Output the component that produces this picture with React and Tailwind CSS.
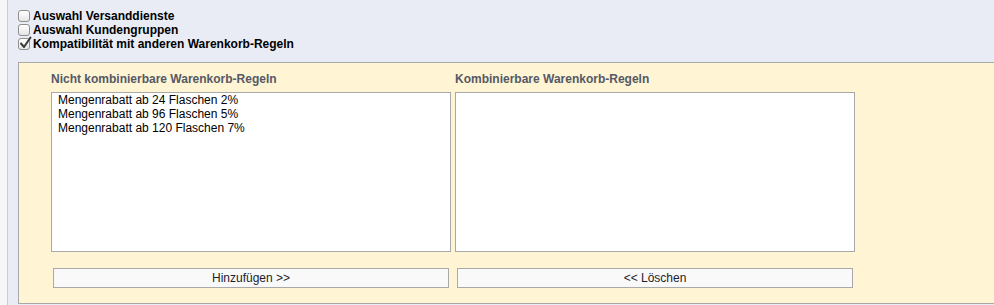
// Warenkorb-Regeln: Kompatibilität zwischen Regeln
const fontStack = { fontFamily: '"Liberation Sans", Arial, Helvetica, sans-serif' };

const options = [
  { label: 'Auswahl Versanddienste', checked: false },
  { label: 'Auswahl Kundengruppen', checked: false },
  { label: 'Kompatibilität mit anderen Warenkorb-Regeln', checked: true },
];

const nonCombinable = [
  'Mengenrabatt ab 24 Flaschen 2%',
  'Mengenrabatt ab 96 Flaschen 5%',
  'Mengenrabatt ab 120 Flaschen 7%',
];

const CheckBox = ({ checked }) => (
  <span className="relative w-[12px] h-[12px] shrink-0 rounded-[3px] border border-[#8e8e8e] bg-gradient-to-b from-white to-[#e6e6e6] shadow-[inset_0_1px_0_#fff]">
    {checked && (
      <svg className="absolute left-[0px] top-[-3px]" width="13" height="14" viewBox="0 0 13 14">
        <path d="M2 7.5 L5 11 L11.5 1.5" fill="none" stroke="#3a3a3a" strokeWidth="2" strokeLinecap="round" strokeLinejoin="round" />
      </svg>
    )}
  </span>
);

const RuleList = ({ title, items }) => (
  <div className="w-[400px] flex flex-col">
    <h3 className="text-[12px] leading-[14px] font-bold text-[#555966]">{title}</h3>
    <div className="mt-[6px] h-[160px] bg-white border border-[#a9a9a9] pl-[6px]">
      {items.map((item) => (
        <div key={item} className="text-[12px] leading-[15px] text-black -mt-[1px] first:mt-0">
          {item}
        </div>
      ))}
    </div>
  </div>
);

const ActionButton = ({ label }) => (
  <button className="w-[396px] h-[20px] mx-[2px] bg-[#f9f9f9] border border-[#a9a9a9] text-[12px] leading-[18px] text-[#1c1c2a]">
    {label}
  </button>
);

export default function App() {
  return (
    <div className="w-[994px] h-[305px] flex bg-white overflow-hidden" style={fontStack}>
      <div className="w-[7px] shrink-0 bg-[#f6f6f8]" />
      <div className="flex-1 border-l border-[#c9cbd3] bg-[#e9ecf5] pl-[10px] flex flex-col">
        <div className="pt-[9px] flex flex-col">
          {options.map((opt) => (
            <label key={opt.label} className="h-[14px] flex items-center gap-[3px] text-[12px] leading-[14px] font-bold text-black">
              <CheckBox checked={opt.checked} />
              <span>{opt.label}</span>
            </label>
          ))}
        </div>

        <div className="mt-[11px] h-[242px] bg-[#fff4d3] border-t border-l border-b border-[#a8a8a8] pl-[32px] pt-[9px]">
          <div className="flex gap-[4px]">
            <RuleList title="Nicht kombinierbare Warenkorb-Regeln" items={nonCombinable} />
            <RuleList title="Kombinierbare Warenkorb-Regeln" items={[]} />
          </div>
          <div className="mt-[16px] flex gap-[4px]">
            <ActionButton label="Hinzufügen >>" />
            <ActionButton label="<< Löschen" />
          </div>
        </div>
      </div>
    </div>
  );
}
